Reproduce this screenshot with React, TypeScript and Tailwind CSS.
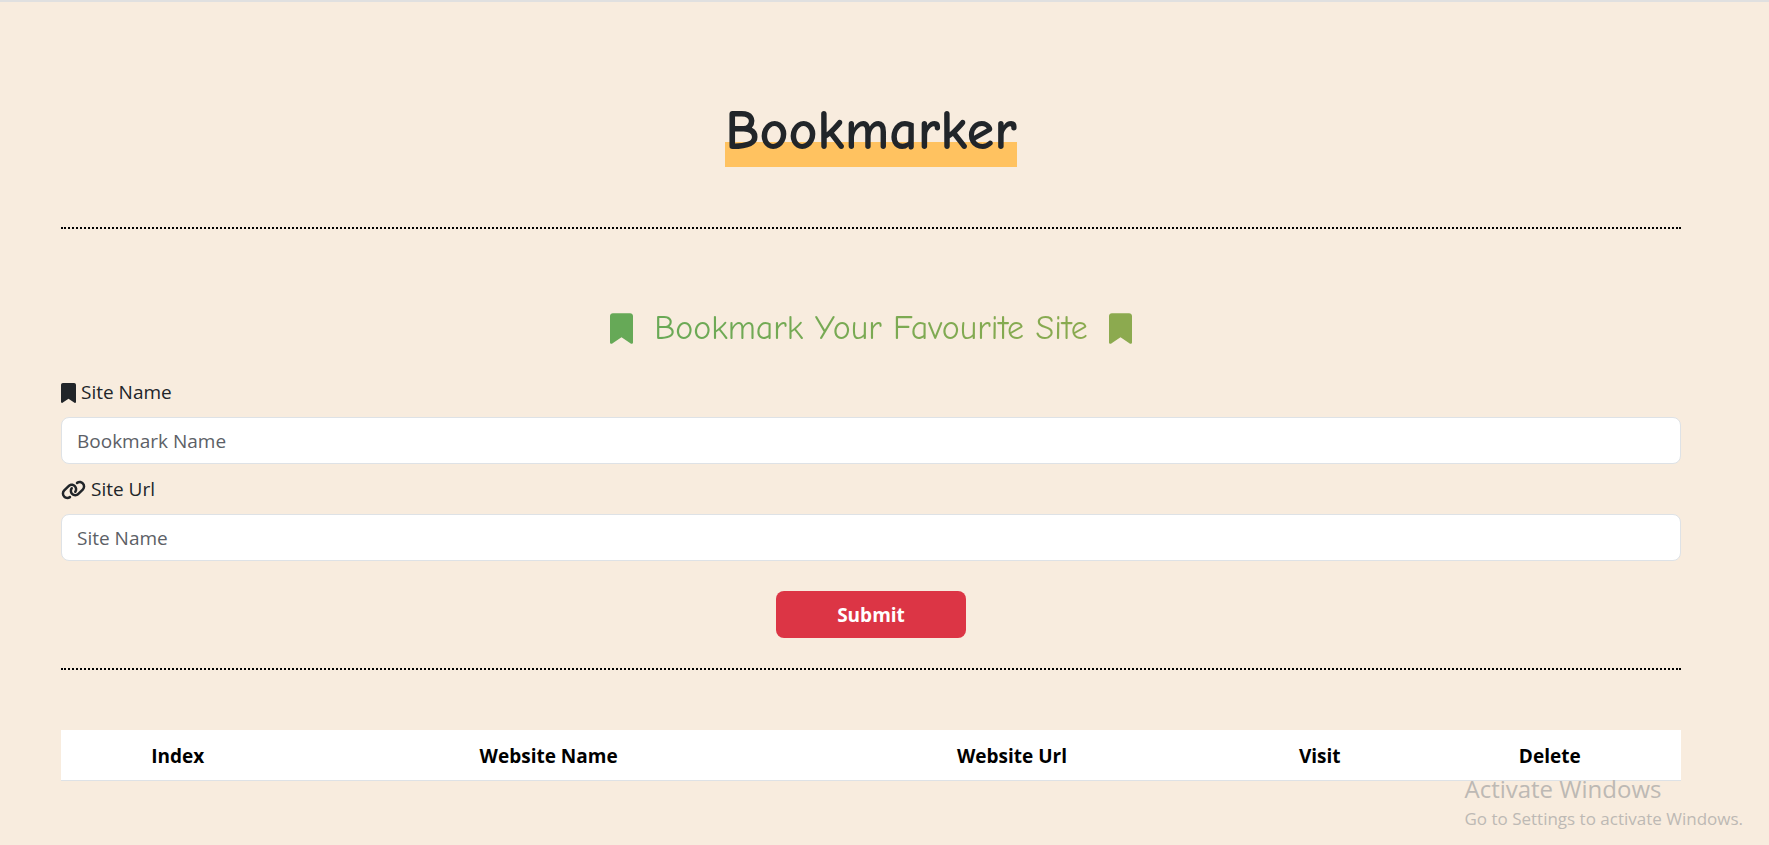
import type { ReactNode } from "react";
import { FaBookmark, FaLink } from "react-icons/fa6";

const columns = [
  { title: "Index", width: "w-[14.4%]" },
  { title: "Website Name", width: "w-[31.4%]" },
  { title: "Website Url", width: "w-[25.8%]" },
  { title: "Visit", width: "w-[12.2%]" },
  { title: "Delete", width: "w-[16.2%]" },
];

function Field(props: { id: string; label: string; placeholder: string; icon: ReactNode }) {
  return (
    <div>
      <label htmlFor={props.id} className="mb-2 flex h-[33px] items-center gap-[5px]">
        {props.icon}
        {props.label}
      </label>
      <input
        id={props.id}
        type="text"
        placeholder={props.placeholder}
        className="block h-[47px] w-full rounded-lg border border-[#dee2e6] bg-white px-[15px] placeholder:text-[#5c6066]"
      />
    </div>
  );
}

function DottedRule() {
  return <hr className="border-t-2 border-dotted border-black" />;
}

export default function App() {
  return (
    <div className="relative min-h-screen border-t-2 border-[#e0e0e0] bg-[#f8ecde] pl-[61px] pr-[88px] font-['Segoe_UI','Open_Sans',sans-serif] text-[19px] text-[#212529]">
      <header className="flex justify-center pt-[94px] pb-[60px]">
        <h1 className="bg-linear-to-b from-transparent from-65% to-[#ffc260] to-65% font-['Comic_Neue','Lato',cursive] text-[56px] leading-[71px] font-bold">
          Bookmarker
        </h1>
      </header>
      <DottedRule />

      <main>
        <div className="flex justify-center pt-[75px] pb-[24px]">
          <h2 className="flex h-[48px] items-center gap-[21px] font-['Comic_Neue','Lato',cursive] text-[34px] font-medium">
            <FaBookmark className="h-[31px] w-[23px] text-[#66a957]" />
            <span className="bg-linear-to-r from-[#69a956] to-[#8aaa4f] bg-clip-text text-transparent">
              Bookmark Your Favourite Site
            </span>
            <FaBookmark className="h-[31px] w-[23px] text-[#8caa4f]" />
          </h2>
        </div>

        <form onSubmit={(e) => e.preventDefault()}>
          <div className="flex flex-col gap-[9px]">
            <Field
              id="site-name"
              label="Site Name"
              placeholder="Bookmark Name"
              icon={<FaBookmark className="h-5 w-[15px]" />}
            />
            <Field
              id="site-url"
              label="Site Url"
              placeholder="Site Name"
              icon={<FaLink className="h-5 w-[25px]" />}
            />
          </div>
          <div className="flex justify-center py-[30px]">
            <button
              type="submit"
              className="h-[47px] rounded-lg bg-[#dc3545] px-[61px] pt-px font-bold text-white"
            >
              Submit
            </button>
          </div>
        </form>
        <DottedRule />

        <table className="mt-[60px] w-full table-fixed border-collapse bg-white text-black">
          <thead>
            <tr>
              {columns.map((c) => (
                <th
                  key={c.title}
                  scope="col"
                  className={`${c.width} h-[50px] border-b border-[#dee2e6] p-0 pt-[2px] text-center font-bold`}
                >
                  {c.title}
                </th>
              ))}
            </tr>
          </thead>
        </table>
      </main>

      <aside className="absolute right-[26px] bottom-[12px] text-[#bdb9b4]">
        <p className="text-[24px] leading-[32px]">Activate Windows</p>
        <p className="text-[17px] leading-[28px]">Go to Settings to activate Windows.</p>
      </aside>
    </div>
  );
}
